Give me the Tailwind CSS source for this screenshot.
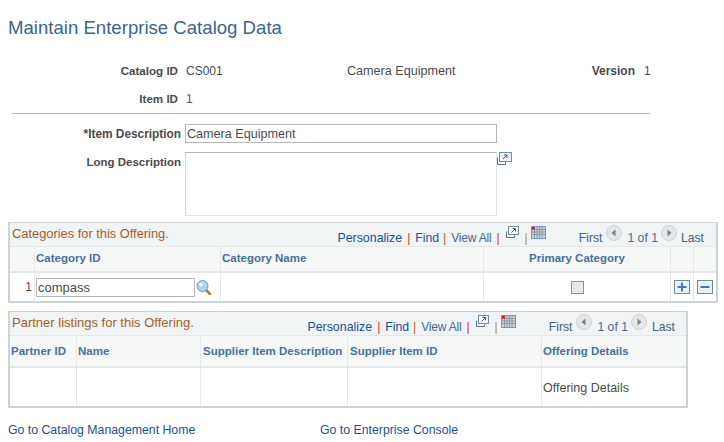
<!DOCTYPE html>
<html lang="en">
<head>
  <meta charset="UTF-8">
  <title>Maintain Enterprise Catalog Data</title>
  <script src="https://cdn.jsdelivr.net/npm/@tailwindcss/browser@4"></script>
</head>
<body class="w-[724px] h-[442px] overflow-hidden bg-white font-['Liberation_Sans',Arial,sans-serif] text-[12px] leading-[14px] text-[#4b4b4b]">
  <div class="pl-2 pt-[17px]">
    <!-- Title -->
    <h1 class="text-[18.6px] leading-[21px] text-[#3c6491]">Maintain Enterprise Catalog Data</h1>

    <!-- Read only fields -->
    <div class="mt-[26px] flex h-[14px]">
      <span class="w-[170px] text-right text-[11.6px] font-bold">Catalog ID</span>
      <span class="ml-2 w-[161px]">CS001</span>
      <span class="w-[220px] text-[12.6px]">Camera Equipment</span>
      <span class="w-[68px] text-right font-bold">Version</span>
      <span class="ml-[9px]">1</span>
    </div>
    <div class="mt-[14px] flex h-[14px]">
      <span class="w-[170px] text-right text-[11.6px] font-bold">Item ID</span>
      <span class="ml-2 text-[#5a4a72]">1</span>
    </div>
    <div class="ml-1 mt-[7px] h-px w-[638px] bg-[#b8b8b8]"></div>

    <!-- Editable fields -->
    <div class="mt-[10px] flex h-[19px] items-center">
      <span class="w-[173px] text-right text-[11.85px] font-bold">*Item Description</span>
      <input class="ml-1 h-[19px] w-[312px] border border-[#b5b5b5] px-[1px] text-[12.6px] text-[#4b4b4b] outline-none" value="Camera Equipment">
    </div>
    <div class="mt-[9px] flex h-[64px]">
      <span class="w-[173px] pt-[3px] text-right text-[11.5px] font-bold">Long Description</span>
      <div class="ml-1 h-[64px] w-[312px] border border-[#dfe3e8] border-t-[#b5b5b5] border-l-[#d5d5d5] bg-white"></div>
      <svg width="15" height="13" viewBox="0 0 15 13">
        <path d="M0.5 5.500v7h8v-2.500" fill="none" stroke="#5f6f7f"/>
        <rect x="2.500" y="0.500" width="12" height="9" fill="#eef3f7" stroke="#6a8cb0"/>
        <path d="M6 7l4-4M7 3h3v3" fill="none" stroke="#4a5a6a"/>
      </svg>
    </div>

    <!-- Categories grid -->
    <div class="mt-[6px] w-[710px] border-2 border-t border-[#ccd3d8]">
      <div class="flex h-[23px] items-start bg-[#f0f4f5]">
        <span class="ml-[2px] mt-[4px] text-[12.85px] text-[#a5602a]">Categories for this Offering.</span>
        <nav class="ml-auto flex pt-[8px] text-[12.2px] text-[#1c4fa0]">
          <a class="text-[12.4px]">Personalize</a>
          <span class="mx-[5px] text-[#c0392b]">|</span>
          <a>Find</a>
          <span class="ml-[4px] mr-[5px] text-[#b5651d]">|</span>
          <a class="text-[12px] tracking-[-0.2px] text-[#4a6a90]">View All</a>
          <span class="mx-[5px] text-[#c0392b]">|</span>
          <svg class="-mt-[6px]" width="15" height="14" viewBox="0 0 15 14">
            <path d="M1.5 6.5v6h8v-2" fill="none" stroke="#5f6f7f"/>
            <rect x="3.5" y="1.5" width="10" height="8" fill="#fff" stroke="#6a8cb0"/>
            <path d="M6.5 7.5l3.500-3.500M7.500 3.500h3v3" fill="none" stroke="#4a5a6a"/>
          </svg>
          <span class="ml-[5px] mr-[3px] text-[#b5951d]">|</span>
          <svg class="-mt-[5px]" width="15" height="13" viewBox="0 0 15 13">
            <rect x="0.5" y="0.5" width="14" height="12" fill="#cdd3db" stroke="#6d96d8"/>
            <path d="M1 3.5h13M1 6h13M1 8.5h13M3.5 1v11M6 1v11M8.5 1v11M11 1v11" stroke="#8f96a0" stroke-width="1"/>
            <rect x="1" y="1" width="3" height="2.5" fill="#e8141c"/>
          </svg>
          <span class="ml-[33px] text-[#4a6080]">First</span>
          <svg class="-mt-[6px] ml-[4px]" width="16" height="16" viewBox="0 0 16 16"><circle cx="8" cy="8" r="7.5" fill="#e4e6e8" stroke="#cfd2d6"/><path d="M9.5 4.5v7L5.5 8z" fill="#7c8088"/></svg>
          <span class="ml-[5px] text-[#4a6a90]">1 of 1</span>
          <svg class="-mt-[6px] ml-[3px]" width="16" height="16" viewBox="0 0 16 16"><circle cx="8" cy="8" r="7.5" fill="#e4e6e8" stroke="#cfd2d6"/><path d="M6.5 4.5v7l4-3.500z" fill="#7c8088"/></svg>
          <span class="ml-[4px] mr-[12px] text-[#4a6080]">Last</span>
        </nav>
      </div>
      <div class="grid grid-cols-[24px_187px_263px_187px_23px_1fr] text-[11.5px] font-bold text-[#4a6f9f]">
        <div class="h-[27px] border-t border-b-2 border-[#e6e8e8] bg-[#f6f7f7]"></div>
        <div class="flex h-[27px] items-center border-x border-t border-b-2 border-[#e6e8e8] bg-[#f6f7f7] pb-[2px] pl-[1px]">Category ID</div>
        <div class="flex h-[27px] items-center border-r border-t border-b-2 border-[#e6e8e8] bg-[#f6f7f7] pb-[2px] pl-[1px]">Category Name</div>
        <div class="flex h-[27px] items-center justify-center border-r border-t border-b-2 border-[#e6e8e8] bg-[#f6f7f7] pb-[2px]">Primary Category</div>
        <div class="h-[27px] border-r border-t border-b-2 border-[#e6e8e8] bg-[#f6f7f7]"></div>
        <div class="h-[27px] border-t border-b-2 border-[#e6e8e8] bg-[#f6f7f7]"></div>

        <div class="flex h-[28px] items-center justify-end pr-[2px] text-[12px] font-normal text-[#4b4b4b]">1</div>
        <div class="flex h-[28px] items-center border-x border-[#e6e8e8] pl-[1px] pt-px">
          <input class="h-[19px] w-[159px] border border-[#b5b5b5] px-[1px] text-[13px] font-normal text-[#4b4b4b] outline-none" value="compass">
          <svg class="ml-[1px]" width="16" height="16" viewBox="0 0 16 16">
            <path d="M10 10l4 4" stroke="#a8803c" stroke-width="2.500" stroke-linecap="round"/>
            <circle cx="6.500" cy="6" r="5.500" fill="#a9d3ee" stroke="#6d9cc0"/>
            <circle cx="5" cy="4.500" r="2" fill="#eef8fd"/>
          </svg>
        </div>
        <div class="h-[28px] border-r border-[#e6e8e8]"></div>
        <div class="flex h-[28px] items-center justify-center border-r border-[#e6e8e8]">
          <span class="h-[13px] w-[13px] border border-[#8f8f8f] bg-[#e8e8e8]"></span>
        </div>
        <div class="flex h-[28px] items-center justify-center border-r border-[#e6e8e8]">
          <svg width="16" height="14" viewBox="0 0 16 14"><rect x="0.500" y="0.500" width="15" height="13" fill="#e9f0f2" stroke="#6f8f98"/><path d="M3.500 7h9M8 2.500v9" stroke="#3f78b5" stroke-width="2"/></svg>
        </div>
        <div class="flex h-[28px] items-center justify-center">
          <svg width="16" height="14" viewBox="0 0 16 14"><rect x="0.500" y="0.500" width="15" height="13" fill="#e9f0f2" stroke="#6f8f98"/><path d="M3.500 7h9" stroke="#3f78b5" stroke-width="2"/></svg>
        </div>
      </div>
    </div>

    <!-- Partner grid -->
    <div class="mt-[8px] w-[680px] border-2 border-t border-[#ccd3d8]">
      <div class="flex h-[23px] items-start bg-[#f0f4f5]">
        <span class="ml-[2px] mt-[4px] text-[13px] text-[#a5602a]">Partner listings for this Offering.</span>
        <nav class="ml-auto flex pt-[8px] text-[12.2px] text-[#1c4fa0]">
          <a class="text-[12.4px]">Personalize</a>
          <span class="mx-[5px] text-[#c0392b]">|</span>
          <a>Find</a>
          <span class="ml-[4px] mr-[5px] text-[#b5651d]">|</span>
          <a class="text-[12px] tracking-[-0.2px] text-[#4a6a90]">View All</a>
          <span class="mx-[5px] text-[#c0392b]">|</span>
          <svg class="-mt-[6px]" width="15" height="14" viewBox="0 0 15 14">
            <path d="M1.5 6.5v6h8v-2" fill="none" stroke="#5f6f7f"/>
            <rect x="3.5" y="1.5" width="10" height="8" fill="#fff" stroke="#6a8cb0"/>
            <path d="M6.5 7.5l3.500-3.500M7.500 3.500h3v3" fill="none" stroke="#4a5a6a"/>
          </svg>
          <span class="ml-[5px] mr-[3px] text-[#b5951d]">|</span>
          <svg class="-mt-[5px]" width="15" height="13" viewBox="0 0 15 13">
            <rect x="0.5" y="0.5" width="14" height="12" fill="#cdd3db" stroke="#6d96d8"/>
            <path d="M1 3.5h13M1 6h13M1 8.5h13M3.5 1v11M6 1v11M8.5 1v11M11 1v11" stroke="#8f96a0" stroke-width="1"/>
            <rect x="1" y="1" width="3" height="2.5" fill="#e8141c"/>
          </svg>
          <span class="ml-[33px] text-[#4a6080]">First</span>
          <svg class="-mt-[6px] ml-[4px]" width="16" height="16" viewBox="0 0 16 16"><circle cx="8" cy="8" r="7.5" fill="#e4e6e8" stroke="#cfd2d6"/><path d="M9.5 4.5v7L5.5 8z" fill="#7c8088"/></svg>
          <span class="ml-[5px] text-[#4a6a90]">1 of 1</span>
          <svg class="-mt-[6px] ml-[3px]" width="16" height="16" viewBox="0 0 16 16"><circle cx="8" cy="8" r="7.5" fill="#e4e6e8" stroke="#cfd2d6"/><path d="M6.5 4.5v7l4-3.500z" fill="#7c8088"/></svg>
          <span class="ml-[5px] mr-[11px] text-[#4a6080]">Last</span>
        </nav>
      </div>
      <div class="grid grid-cols-[67px_124px_147px_194px_1fr] text-[11.5px] font-bold text-[#4a6f9f]">
        <div class="flex h-[33px] items-center border-r border-t border-b-2 border-[#e6e8e8] bg-[#f6f7f7] pl-[1px]">Partner ID</div>
        <div class="flex h-[33px] items-center border-r border-t border-b-2 border-[#e6e8e8] bg-[#f6f7f7] pl-[1px]">Name</div>
        <div class="flex h-[33px] items-center border-r border-t border-b-2 border-[#e6e8e8] bg-[#f6f7f7] pl-[2px]">Supplier Item Description</div>
        <div class="flex h-[33px] items-center border-r border-t border-b-2 border-[#e6e8e8] bg-[#f6f7f7] pl-[2px]">Supplier Item ID</div>
        <div class="flex h-[33px] items-center border-t border-b-2 border-[#e6e8e8] bg-[#f6f7f7] pl-[1px]">Offering Details</div>
        <div class="h-[38px] border-r border-[#e6e8e8]"></div>
        <div class="h-[38px] border-r border-[#e6e8e8]"></div>
        <div class="h-[38px] border-r border-[#e6e8e8]"></div>
        <div class="h-[38px] border-r border-[#e6e8e8]"></div>
        <div class="flex h-[38px] items-center pl-[1px] pt-[2px] text-[12.5px] font-normal text-[#4b4b4b]">Offering Details</div>
      </div>
    </div>

    <!-- Footer links -->
    <div class="mt-[15px] flex text-[12.3px] text-[#1c4fa0]">
      <a class="w-[312px]">Go to Catalog Management Home</a>
      <a>Go to Enterprise Console</a>
    </div>
  </div>
</body>
</html>
